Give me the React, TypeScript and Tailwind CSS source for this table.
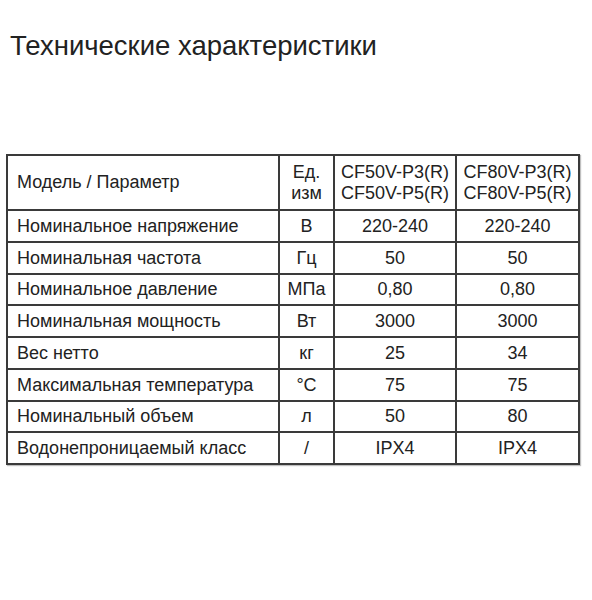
const rows: [string, string, string, string][] = [
  ["Номинальное напряжение", "В", "220-240", "220-240"],
  ["Номинальная частота", "Гц", "50", "50"],
  ["Номинальное давление", "МПа", "0,80", "0,80"],
  ["Номинальная мощность", "Вт", "3000", "3000"],
  ["Вес нетто", "кг", "25", "34"],
  ["Максимальная температура", "°C", "75", "75"],
  ["Номинальный объем", "л", "50", "80"],
  ["Водонепроницаемый класс", "/", "IPX4", "IPX4"],
];

export default function App() {
  return (
    <div className="w-[592px] h-[600px] bg-white text-[#222] font-['Liberation_Sans',Arial,sans-serif]">
      <h1 className="pl-[10px] pt-[30px] text-[27.5px] leading-[32px] font-normal">
        Технические характеристики
      </h1>
      <table className="ml-[6px] mt-[92px] w-[572px] table-fixed border-collapse border-2 border-[#3a3a3a] text-[18px] shadow-[1px_1px_1px_rgba(0,0,0,0.25)]">
        <colgroup>
          <col className="w-[272px]" />
          <col className="w-[55px]" />
          <col className="w-[122px]" />
          <col className="w-[123px]" />
        </colgroup>
        <thead>
          <tr className="h-[55px]">
            <th className="border-2 border-[#3a3a3a] px-[9px] text-left font-normal">Модель / Параметр</th>
            <th className="border-2 border-[#3a3a3a] text-center font-normal leading-[21px]">
              Ед.
              <br />
              изм
            </th>
            <th className="border-2 border-[#3a3a3a] text-center font-normal leading-[21px] whitespace-nowrap">
              CF50V-P3(R)
              <br />
              CF50V-P5(R)
            </th>
            <th className="border-2 border-[#3a3a3a] text-center font-normal leading-[21px] whitespace-nowrap">
              CF80V-P3(R)
              <br />
              CF80V-P5(R)
            </th>
          </tr>
        </thead>
        <tbody>
          {rows.map((r) => (
            <tr key={r[0]} className="h-[31.75px]">
              <td className="border-2 border-[#3a3a3a] px-[9px] leading-[20px]">{r[0]}</td>
              <td className="border-2 border-[#3a3a3a] text-center leading-[20px]">{r[1]}</td>
              <td className="border-2 border-[#3a3a3a] text-center leading-[20px]">{r[2]}</td>
              <td className="border-2 border-[#3a3a3a] text-center leading-[20px]">{r[3]}</td>
            </tr>
          ))}
        </tbody>
      </table>
    </div>
  );
}
